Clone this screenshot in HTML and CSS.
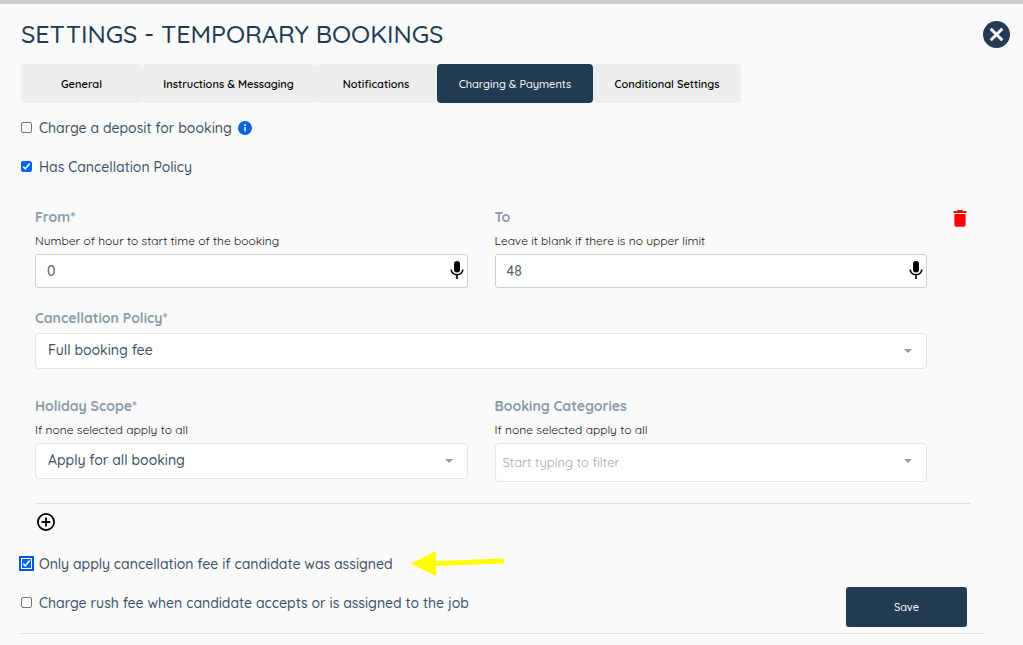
FILE: index.html
```html
<!DOCTYPE html>
<html lang="en">
<head>
<meta charset="utf-8">
<meta name="viewport" content="width=device-width, initial-scale=1">
<title>Settings - Temporary Bookings</title>
<link rel="stylesheet" href="styles.css">
</head>
<body>
<main class="dialog">
  <header class="dialog-head">
    <h1 class="title">SETTINGS - TEMPORARY BOOKINGS</h1>
    <button class="close" type="button" aria-label="Close">
      <svg viewBox="0 0 27 27" width="27" height="27" aria-hidden="true"><circle cx="13.5" cy="13.5" r="13.5" fill="#223a52"/><path d="M7.7 7.7l11.6 11.6M19.3 7.7L7.7 19.3" stroke="#fff" stroke-width="3" fill="none"/></svg>
    </button>
  </header>

  <form class="content">
    <nav class="tabs" aria-label="Settings sections">
      <button class="tab" type="button">General</button>
      <button class="tab" type="button">Instructions &amp; Messaging</button>
      <button class="tab" type="button">Notifications</button>
      <button class="tab tab-active" type="button">Charging &amp; Payments</button>
      <button class="tab" type="button">Conditional Settings</button>
    </nav>

    <div class="check-row">
      <input class="check" type="checkbox" id="deposit">
      <label for="deposit">Charge a deposit for booking</label>
      <svg class="info" viewBox="0 0 14 14" width="14" height="14" aria-hidden="true"><circle cx="7" cy="7" r="7" fill="#0463e1"/><circle cx="7" cy="4" r="1" fill="#fff"/><path d="M7 6v4.6" stroke="#fff" stroke-width="1.5" fill="none"/></svg>
    </div>
    <div class="check-row">
      <input class="check" type="checkbox" id="policy-on" checked>
      <label for="policy-on">Has Cancellation Policy</label>
    </div>

    <section class="policy">
      <div class="fields">
        <div class="field">
          <label class="label" for="from">From*</label>
          <span class="hint">Number of hour to start time of the booking</span>
          <div class="control">
            <input class="box text-box" id="from" type="text" value="0">
            <svg class="mic" viewBox="0 0 14 18" width="14" height="18" aria-hidden="true"><rect x="4" y="0" width="6" height="11.5" rx="3"/><path d="M1.2 8.5a5.8 5.3 0 0 0 11.6 0M7 14v4" stroke="#000" stroke-width="1.6" fill="none"/></svg>
          </div>
        </div>
        <div class="field">
          <label class="label" for="to">To</label>
          <span class="hint">Leave it blank if there is no upper limit</span>
          <div class="control">
            <input class="box text-box" id="to" type="text" value="48">
            <svg class="mic" viewBox="0 0 14 18" width="14" height="18" aria-hidden="true"><rect x="4" y="0" width="6" height="11.5" rx="3"/><path d="M1.2 8.5a5.8 5.3 0 0 0 11.6 0M7 14v4" stroke="#000" stroke-width="1.6" fill="none"/></svg>
          </div>
        </div>
        <div class="field field-wide">
          <label class="label" for="policy">Cancellation Policy*</label>
          <div class="control">
            <select class="box select" id="policy"><option>Full booking fee</option></select>
            <svg class="caret" viewBox="0 0 8 4" width="8" height="4" aria-hidden="true"><path d="M0 0h8L4 4z"/></svg>
          </div>
        </div>
        <div class="field">
          <label class="label" for="scope">Holiday Scope*</label>
          <span class="hint">If none selected apply to all</span>
          <div class="control">
            <select class="box select" id="scope"><option>Apply for all booking</option></select>
            <svg class="caret" viewBox="0 0 8 4" width="8" height="4" aria-hidden="true"><path d="M0 0h8L4 4z"/></svg>
          </div>
        </div>
        <div class="field">
          <label class="label" for="categories">Booking Categories</label>
          <span class="hint">If none selected apply to all</span>
          <div class="control">
            <input class="box filter" id="categories" type="text" placeholder="Start typing to filter">
            <svg class="caret" viewBox="0 0 8 4" width="8" height="4" aria-hidden="true"><path d="M0 0h8L4 4z"/></svg>
          </div>
        </div>
      </div>
      <button class="icon-button" type="button" aria-label="Delete policy">
        <svg viewBox="0 0 14 17" width="14" height="17" aria-hidden="true"><path fill="#f00" d="M.5 1h3.4l1-1h4.2l1 1h3.4v2H.5zM1.4 4h11.2v11a1.8 1.8 0 0 1-1.8 1.8H3.2A1.8 1.8 0 0 1 1.4 15z"/></svg>
      </button>
    </section>

    <button class="icon-button add" type="button" aria-label="Add policy">
      <svg viewBox="0 0 18 18" width="18" height="18" aria-hidden="true"><circle cx="9" cy="9" r="8.1" fill="none" stroke="#000" stroke-width="1.8"/><path d="M9 4.6v8.8M4.6 9h8.8" stroke="#000" stroke-width="1.8"/></svg>
    </button>

    <footer class="footer">
      <div class="options">
        <div class="check-row">
          <input class="check check-focus" type="checkbox" id="assigned" checked>
          <label for="assigned">Only apply cancellation fee if candidate was assigned</label>
          <svg class="arrow" viewBox="0 0 94 26" width="94" height="26" aria-hidden="true"><path fill="#ff0" d="M0 12.5L25 0v10L93 7.5v5L25 15v10z"/></svg>
        </div>
        <div class="check-row">
          <input class="check" type="checkbox" id="rush">
          <label for="rush">Charge rush fee when candidate accepts or is assigned to the job</label>
        </div>
      </div>
      <button class="save" type="submit">Save</button>
    </footer>
  </form>
</main>
</body>
</html>
```
FILE: styles.css
```css
* { box-sizing: border-box; }

body {
  margin: 0;
  background: #fafafa;
  color: #3a5068;
  font: 500 14px/20px Quicksand, Lato, sans-serif;
}

button, input, select { font: inherit; }
button { border: 0; padding: 0; cursor: pointer; }

.dialog {
  border-top: 4px solid #cbcbcb;
  padding: 0 13px 11px 21px;
}

.dialog-head {
  display: flex;
  justify-content: space-between;
  align-items: center;
  height: 60px;
}

.title {
  margin: 0;
  color: #223a52;
  font-size: 25px;
  font-weight: 500;
  line-height: 32px;
}

.close { display: flex; background: none; }

.content { margin-right: 26px; }

.tabs {
  display: grid;
  grid-template-columns: 121px 173px 122px 156px 148px;
  margin-bottom: 5px;
}

.tab {
  height: 39px;
  border-radius: 4px;
  background: #eee;
  color: #000;
  font-size: 11px;
  font-weight: 600;
}

.tab-active { background: #223a52; color: #fff; font-weight: 500; }

.check-row {
  display: flex;
  align-items: center;
  height: 39px;
}

.check {
  appearance: none;
  width: 11px;
  height: 11px;
  margin: 0 7px 0 0;
  border: 1px solid #767676;
  border-radius: 2px;
  background: #fff;
}

.check:checked {
  border-color: #0463ff;
  background: #0463ff url("data:image/svg+xml,%3Csvg xmlns='http://www.w3.org/2000/svg' viewBox='0 0 9 9'%3E%3Cpath d='M1.2 4.8l2.1 2.1 4.3-5.4' fill='none' stroke='%23fff' stroke-width='1.6'/%3E%3C/svg%3E") center / 9px 9px no-repeat;
}

.check-focus:checked {
  border-color: #fff;
  border-radius: 0;
  outline: 2px solid #0058d8;
}

.info { margin-left: 6px; }
.arrow { margin-left: 18px; }

.policy {
  display: grid;
  grid-template-columns: 1fr 17px;
  column-gap: 26px;
  align-items: start;
  margin: 21px 14px 0;
  padding-bottom: 21px;
  border-bottom: 1px solid #dedede;
}

.fields {
  display: grid;
  grid-template-columns: 1fr 1fr;
  column-gap: 27px;
}

.field { padding-bottom: 20px; }
.field-wide { grid-column: 1 / -1; padding-bottom: 27px; }
.field:nth-last-child(-n+2) { padding-bottom: 0; }

.label {
  display: block;
  color: #8c9aa9;
  font-weight: 700;
  padding-bottom: 4px;
}

.field-wide .label { padding-bottom: 5px; }

.hint {
  display: block;
  padding-bottom: 3px;
  color: #111;
  font-size: 12px;
  font-weight: 400;
  line-height: 20px;
}

.control { position: relative; }

.box {
  display: block;
  width: 100%;
  height: 36px;
  padding: 0 12px 2px;
  border: 1px solid #e4e4e4;
  border-radius: 4px;
  background: #fff;
  color: #3a5068;
}

.text-box {
  height: 34px;
  padding: 0 24px 0 11px;
  border-color: #c8d0da;
  border-radius: 3px;
  color: #5a6067;
}

.select { appearance: none; }

.filter { height: 39px; padding: 0 7px 1px; font-size: 13px; font-weight: 400; }
.filter::placeholder { color: #aaa; }

.mic { position: absolute; top: 7px; right: 4px; }
.caret { position: absolute; top: 16px; right: 15px; fill: #999; }

.icon-button { display: flex; background: none; }
.policy .icon-button { margin-top: 3px; }
.add { margin: 9px 0 13px 16px; }

.footer {
  display: flex;
  justify-content: space-between;
  align-items: flex-end;
  padding: 0 17px 6px 0;
  border-bottom: 1px solid #dedede;
}

.options { padding-bottom: 5px; }

.save {
  width: 121px;
  height: 40px;
  border-radius: 3px;
  background: #223a52;
  color: #fff;
  font-size: 11px;
}
```
